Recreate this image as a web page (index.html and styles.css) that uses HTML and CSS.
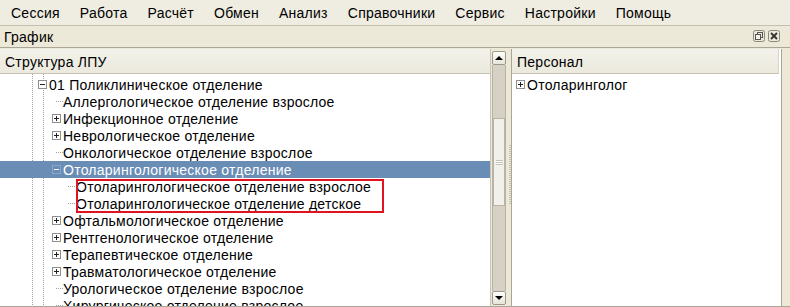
FILE: index.html
```html
<!DOCTYPE html>
<html lang="ru">
<head>
    <meta charset="UTF-8">
    <title>График</title>
    <link rel="stylesheet" href="styles.css">
</head>
<body>
    <div class="menubar">
        <span class="menu-item">Сессия</span>
        <span class="menu-item">Работа</span>
        <span class="menu-item">Расчёт</span>
        <span class="menu-item">Обмен</span>
        <span class="menu-item">Анализ</span>
        <span class="menu-item">Справочники</span>
        <span class="menu-item">Сервис</span>
        <span class="menu-item">Настройки</span>
        <span class="menu-item">Помощь</span>
    </div>

    <div class="doc">
        <div class="doc-title">
            <span>График</span>
            <div class="doc-buttons">
                <span class="doc-btn">
                    <svg width="12" height="12" viewBox="0 0 12 12">
                        <rect x="0.5" y="0.5" width="11" height="11" rx="2" fill="none" stroke="#8a877c"/>
                        <rect x="4.5" y="2.5" width="5" height="5" fill="none" stroke="#555"/>
                        <rect x="2.5" y="4.5" width="5" height="5" fill="#f4f3ee" stroke="#555"/>
                    </svg>
                </span>
                <span class="doc-btn">
                    <svg width="12" height="12" viewBox="0 0 12 12">
                        <rect x="0.5" y="0.5" width="11" height="11" rx="2" fill="none" stroke="#8a877c"/>
                        <path d="M3 3 L9 9 M9 3 L3 9" stroke="#333" stroke-width="1.8"/>
                    </svg>
                </span>
            </div>
        </div>

        <div class="panes">
            <div class="pane pane-left">
                <div class="pane-main">
                    <div class="col-head">Структура ЛПУ</div>
                    <div class="tree tree-lines">
                        <div class="row lvl0"><span class="box minus"></span><span class="label">01 Поликлиническое отделение</span></div>
                        <div class="row lvl1"><span class="leaf"></span><span class="label">Аллергологическое отделение взрослое</span></div>
                        <div class="row lvl1"><span class="box plus"></span><span class="label">Инфекционное отделение</span></div>
                        <div class="row lvl1"><span class="box plus"></span><span class="label">Неврологическое отделение</span></div>
                        <div class="row lvl1"><span class="leaf"></span><span class="label">Онкологическое отделение взрослое</span></div>
                        <div class="row lvl1 selected"><span class="box minus"></span><span class="label">Отоларингологическое отделение</span></div>
                        <div class="marked">
                            <div class="row lvl2"><span class="leaf"></span><span class="label">Отоларингологическое отделение взрослое</span></div>
                            <div class="row lvl2"><span class="leaf"></span><span class="label">Отоларингологическое отделение детское</span></div>
                            <div class="mark-frame"></div>
                        </div>
                        <div class="row lvl1"><span class="box plus"></span><span class="label">Офтальмологическое отделение</span></div>
                        <div class="row lvl1"><span class="box plus"></span><span class="label">Рентгенологическое отделение</span></div>
                        <div class="row lvl1"><span class="box plus"></span><span class="label">Терапевтическое отделение</span></div>
                        <div class="row lvl1"><span class="box plus"></span><span class="label">Травматологическое отделение</span></div>
                        <div class="row lvl1"><span class="leaf"></span><span class="label">Урологическое отделение взрослое</span></div>
                        <div class="row lvl1"><span class="leaf"></span><span class="label">Хирургическое отделение взрослое</span></div>
                    </div>
                </div>
                <div class="vscroll">
                    <div class="sb-btn"><span class="arrow-up"></span></div>
                    <div class="sb-track">
                        <div class="sb-thumb"><span class="grip"></span></div>
                    </div>
                    <div class="sb-btn"><span class="arrow-down"></span></div>
                </div>
            </div>

            <div class="splitter"></div>

            <div class="pane pane-right">
                <div class="col-head">Персонал</div>
                <div class="tree">
                    <div class="row lvl-r"><span class="box plus"></span><span class="label">Отоларинголог</span></div>
                </div>
            </div>
        </div>
    </div>
</body>
</html>
```

FILE: styles.css
```css
body {
    margin: 0;
    background: #ece9d8;
    font-family: 'Liberation Sans', Arial, sans-serif;
    font-size: 14px;
    letter-spacing: 0.25px;
    color: #000;
    overflow: hidden;
}
.menubar {
    height: 25px;
    display: flex;
    align-items: center;
    padding-left: 11px;
    gap: 20px;
    background: #efede2;
    border-bottom: 1px solid #c4c0b0;
}
.menu-item {
    line-height: 25px;
    padding-top: 2px;
}
.doc-title {
    height: 21px;
    display: flex;
    align-items: center;
    justify-content: space-between;
    padding-left: 4px;
    border-bottom: 1px solid #a9a695;
}
.doc-buttons {
    display: flex;
    gap: 3px;
    padding-right: 10px;
    padding-bottom: 2px;
}
.doc-btn {
    display: block;
    width: 12px;
    height: 12px;
}
.doc-btn svg {
    display: block;
}
.panes {
    display: flex;
    height: 257px;
    padding-top: 1px;
    border-bottom: 1px solid #a9a695;
}
.pane {
    display: flex;
    background: #fff;
}
.pane-left {
    width: 507px;
}
.pane-main {
    width: 490px;
    display: flex;
    flex-direction: column;
    border-right: 1px solid #c9c6b8;
}
.pane-right {
    width: 269px;
    flex-direction: column;
    border-left: 1px solid #a9a695;
    border-right: 1px solid #a9a695;
}
.col-head {
    height: 24px;
    line-height: 26px;
    padding-left: 5px;
    background: linear-gradient(#f3f2ea, #ebe9dd);
    border-bottom: 1px solid #c6c2b0;
    white-space: nowrap;
}
.pane-right .col-head {
    padding-left: 5px;
    margin-right: 2px;
    border-right: 1px solid #d8d5c8;
}
.tree {
    flex: 1;
    padding-top: 2px;
    overflow: hidden;
    white-space: nowrap;
}
.tree-lines {
    background-image:
        repeating-linear-gradient(to bottom, #a0a0a0 0 1px, transparent 1px 2px),
        repeating-linear-gradient(to bottom, #a0a0a0 0 1px, transparent 1px 2px);
    background-size: 1px 100%, 1px 100%;
    background-position: 32px 0, 43px 0;
    background-repeat: no-repeat;
}
.row {
    height: 17px;
    display: flex;
    align-items: center;
}
.row.lvl0 { padding-left: 38px; }
.row.lvl1 { padding-left: 52px; }
.row.lvl2 { padding-left: 68px; }
.row.lvl-r { padding-left: 4px; }
.row.selected {
    background: #6a8db5;
    color: #fff;
}
.label {
    margin-left: 2px;
    padding-top: 1px;
}
.box {
    position: relative;
    width: 7px;
    height: 7px;
    border: 1px solid #8f8f8f;
    background: #fff;
    flex: none;
}
.box::before {
    content: '';
    position: absolute;
    left: 1px;
    top: 3px;
    width: 5px;
    height: 1px;
    background: #222;
}
.box.plus::after {
    content: '';
    position: absolute;
    left: 3px;
    top: 1px;
    width: 1px;
    height: 5px;
    background: #222;
}
.selected .box {
    background: #6a8db5;
    border-color: #8aa6c8;
}
.selected .box::before {
    background: #fff;
}
.leaf {
    width: 7px;
    height: 1px;
    margin-left: 4px;
    margin-right: -2px;
    background: repeating-linear-gradient(to right, #a0a0a0 0 1px, transparent 1px 2px);
    flex: none;
}
.lvl2 .leaf {
    margin-left: 0;
    margin-right: -1px;
}
.marked {
    position: relative;
}
.mark-frame {
    position: absolute;
    left: 76px;
    top: 1px;
    width: 304px;
    height: 30px;
    border: 2px solid #e0141e;
}
.vscroll {
    width: 16px;
    display: flex;
    flex-direction: column;
    background: #ece9d8;
    padding-top: 2px;
    padding-bottom: 1px;
}
.sb-btn {
    height: 12px;
    margin: 0 1px;
    border: 1px solid #9c998b;
    border-radius: 2px;
    background: linear-gradient(#fdfdfb, #e7e5dc);
    display: flex;
    align-items: center;
    justify-content: center;
}
.arrow-up {
    width: 0;
    height: 0;
    border-left: 4px solid transparent;
    border-right: 4px solid transparent;
    border-bottom: 4px solid #000;
}
.arrow-down {
    width: 0;
    height: 0;
    border-left: 4px solid transparent;
    border-right: 4px solid transparent;
    border-top: 4px solid #000;
}
.sb-track {
    flex: 1;
    margin: 0 1px;
    background: #d6d0c5;
    border-left: 1px solid #b6b2a6;
    border-right: 1px solid #b6b2a6;
    padding-top: 53px;
}
.sb-thumb {
    height: 86px;
    background: #f1f0ea;
    border: 1px solid #b8b5a8;
    display: flex;
    align-items: center;
    justify-content: center;
}
.grip {
    width: 7px;
    height: 5px;
    background: repeating-linear-gradient(to bottom, #c4c1b5 0 1px, #fff 1px 2px);
}
.splitter {
    width: 3px;
    background: repeating-linear-gradient(to bottom, #c8c4b4 0 1px, #ece9d8 1px 2px);
    background-size: 2px 60px;
    background-position: 1px 96px;
    background-repeat: no-repeat;
    margin-left: 1px;
}
```
